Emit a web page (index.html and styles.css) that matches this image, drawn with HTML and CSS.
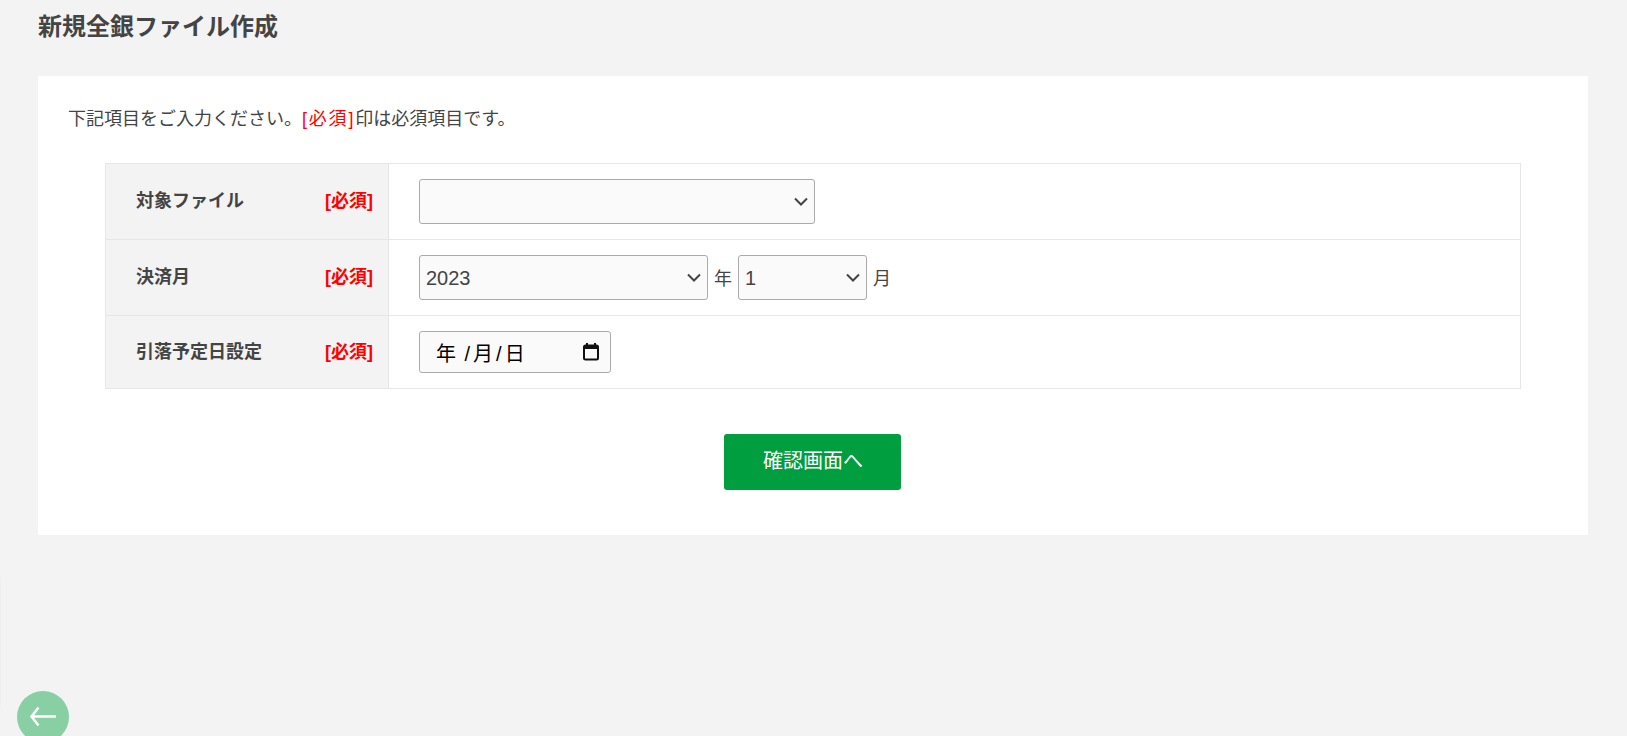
FILE: index.html
```html
<!DOCTYPE html>
<html lang="ja">
<head>
<meta charset="utf-8">
<title>新規全銀ファイル作成</title>
<link rel="stylesheet" href="styles.css">
</head>
<body>
<main class="page">
  <h1 class="title">新規全銀ファイル作成</h1>
  <section class="card">
    <p class="lead">下記項目をご入力ください。<span class="req-plain">[必須]</span>印は必須項目です。</p>
    <div class="form-table">
      <div class="row">
        <div class="label"><span>対象ファイル</span><span class="req">[必須]</span></div>
        <div class="field"><select class="sel sel-file"><option></option></select></div>
      </div>
      <div class="row">
        <div class="label"><span>決済月</span><span class="req">[必須]</span></div>
        <div class="field">
          <select class="sel sel-year"><option>2023</option></select>
          <span class="unit">年</span>
          <select class="sel sel-month"><option>1</option></select>
          <span class="unit">月</span>
        </div>
      </div>
      <div class="row row-last">
        <div class="label"><span>引落予定日設定</span><span class="req">[必須]</span></div>
        <div class="field">
          <div class="date">
            <span class="date-text">年 /月/日</span>
            <svg class="cal" width="18" height="20" viewBox="0 0 18 20"><path d="M5 1v2M13 1v2" stroke="#111" stroke-width="2"/><rect x="2" y="3.500" width="14" height="14" rx="1.500" fill="none" stroke="#111" stroke-width="2"/><rect x="2" y="3" width="14" height="4" fill="#111"/></svg>
          </div>
        </div>
      </div>
    </div>
    <div class="actions"><button class="submit" type="button">確認画面へ</button></div>
  </section>
</main>
<div class="edge"></div>
<a class="back" href="#" aria-label="戻る">
  <svg width="28" height="22" viewBox="0 0 28 22"><path d="M27 10.500H2M9.500 1.500 2.500 10.500l7 9" fill="none" stroke="#fff" stroke-width="2.500"/></svg>
</a>
</body>
</html>
```

FILE: styles.css
```css
* { box-sizing: border-box; }
html, body { margin: 0; height: 100%; overflow: hidden; }
body {
  background: #f3f3f3;
  color: #444;
  font-family: "Liberation Sans", "Noto Sans CJK JP", sans-serif;
  font-size: 18px;
}
.page { padding: 0 39px 0 38px; }
.title {
  margin: 0;
  height: 76px;
  padding-top: 12px;
  font-size: 24px;
  line-height: 30px;
  font-weight: 700;
}
.card {
  background: #fff;
  height: 459px;
  padding: 31px 30px 0;
}
.lead { margin: 0; font-size: 18px; line-height: 24px; height: 56px; }
.req-plain { color: #f00; letter-spacing: 1.8px; }
.form-table {
  margin: 0 37px;
  border: 1px solid #e6e6e6;
  border-bottom: 0;
}
.row { display: flex; height: 76px; border-bottom: 1px solid #e6e6e6; }
.row-last { height: 73px; }
.label {
  width: 283px;
  background: #f3f3f3;
  border-right: 1px solid #e6e6e6;
  padding: 0 15px 5px 30px;
  display: flex;
  align-items: center;
  justify-content: space-between;
  font-weight: 700;
  font-size: 18px;
}
.req { color: #f00; }
.field { flex: 1; display: flex; align-items: center; padding-left: 30px; gap: 6px; }
.sel {
  appearance: none;
  height: 45px;
  background-color: #fafafa;
  background-image: url("data:image/svg+xml,%3Csvg xmlns='http://www.w3.org/2000/svg' width='14' height='9' viewBox='0 0 14 9'%3E%3Cpath d='M1 1.500l6 6 6-6' fill='none' stroke='%23444' stroke-width='2'/%3E%3C/svg%3E");
  background-repeat: no-repeat;
  background-position: right 6px center;
  border: 1px solid #aaa;
  border-radius: 3px;
  color: #444;
  font-family: inherit;
  font-size: 20px;
  padding: 0 0 0 6px;
}
.sel-file { width: 396px; }
.sel-year { width: 289px; }
.sel-month { width: 129px; }
.unit { font-size: 18px; margin-bottom: 2px; }
.date {
  width: 192px;
  height: 42px;
  background: #fafafa;
  border: 1px solid #aaa;
  border-radius: 3px;
  display: flex;
  align-items: center;
  justify-content: space-between;
  padding: 0 10px 0 16px;
  color: #000;
  font-size: 20px;
  letter-spacing: 3px;
  word-spacing: -3px;
}
.actions { display: flex; justify-content: center; margin-top: 45px; padding-right: 2px; }
.submit {
  width: 177px;
  height: 56px;
  background: #009e3e;
  color: #fff;
  border: 0;
  border-radius: 3px;
  font-family: inherit;
  font-size: 20px;
  padding: 0 0 5px 2px;
}
.edge {
  position: fixed;
  left: 0;
  top: 577px;
  width: 1px;
  height: 130px;
  background: #efefef;
}
.back {
  position: fixed;
  left: 17px;
  top: 691px;
  width: 52px;
  height: 52px;
  border-radius: 50%;
  background: #88d0a3;
  display: flex;
  align-items: center;
  justify-content: center;
}
```
